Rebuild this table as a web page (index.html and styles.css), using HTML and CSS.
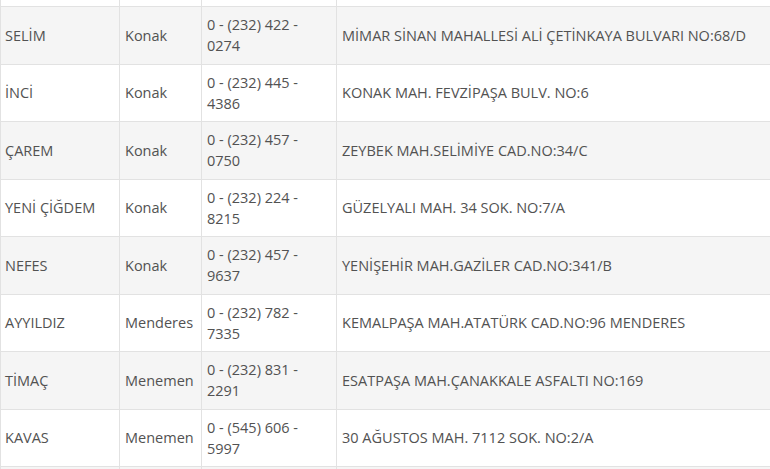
FILE: index.html
```html
<!DOCTYPE html>
<html lang="tr">
<head>
<meta charset="utf-8">
<link rel="stylesheet" href="styles.css">
</head>
<body>
<div class="wrap">
<table class="list">
  <colgroup>
    <col class="c-name"><col class="c-town"><col class="c-phone"><col class="c-addr">
  </colgroup>
  <tbody>
    <tr class="spacer"><td></td><td></td><td></td><td></td></tr>
    <tr class="odd"><td>SELİM</td><td>Konak</td><td>0 - (232) 422 - 0274</td><td>MİMAR SİNAN MAHALLESİ ALİ ÇETİNKAYA BULVARI NO:68/D</td></tr>
    <tr><td>İNCİ</td><td>Konak</td><td>0 - (232) 445 - 4386</td><td>KONAK MAH. FEVZİPAŞA BULV. NO:6</td></tr>
    <tr class="odd"><td>ÇAREM</td><td>Konak</td><td>0 - (232) 457 - 0750</td><td>ZEYBEK MAH.SELİMİYE CAD.NO:34/C</td></tr>
    <tr><td>YENİ ÇİĞDEM</td><td>Konak</td><td>0 - (232) 224 - 8215</td><td>GÜZELYALI MAH. 34 SOK. NO:7/A</td></tr>
    <tr class="odd"><td>NEFES</td><td>Konak</td><td>0 - (232) 457 - 9637</td><td>YENİŞEHİR MAH.GAZİLER CAD.NO:341/B</td></tr>
    <tr><td>AYYILDIZ</td><td>Menderes</td><td>0 - (232) 782 - 7335</td><td>KEMALPAŞA MAH.ATATÜRK CAD.NO:96 MENDERES</td></tr>
    <tr class="odd"><td>TİMAÇ</td><td>Menemen</td><td>0 - (232) 831 - 2291</td><td>ESATPAŞA MAH.ÇANAKKALE ASFALTI NO:169</td></tr>
    <tr><td>KAVAS</td><td>Menemen</td><td>0 - (545) 606 - 5997</td><td>30 AĞUSTOS MAH. 7112 SOK. NO:2/A</td></tr>
    <tr class="odd"><td>&nbsp;</td><td></td><td></td><td></td></tr>
  </tbody>
</table>
</div>
</body>
</html>
```

FILE: styles.css
```css
html, body {
  margin: 0;
  padding: 0;
  background: #fff;
}
.wrap {
  width: 770px;
  height: 469px;
  overflow: hidden;
}
.list {
  border-collapse: collapse;
  table-layout: fixed;
  width: 900px;
  font-family: "Open Sans", "Liberation Sans", sans-serif;
  font-size: 14.5px;
  line-height: 21px;
  color: #525252;
}
.c-name { width: 119px; }
.c-town { width: 82px; }
.c-phone { width: 135px; }
.c-addr { width: 564px; }
.list td {
  border: 1px solid #e2e2e2;
  padding: 7px 5px 7.5px 4px;
  vertical-align: middle;
}
.list td + td {
  padding-left: 5px;
}
.list tr.spacer td {
  border-top: none;
  height: 6px;
  padding: 0;
}
.list tr.odd td {
  background: #f5f5f5;
}
```
